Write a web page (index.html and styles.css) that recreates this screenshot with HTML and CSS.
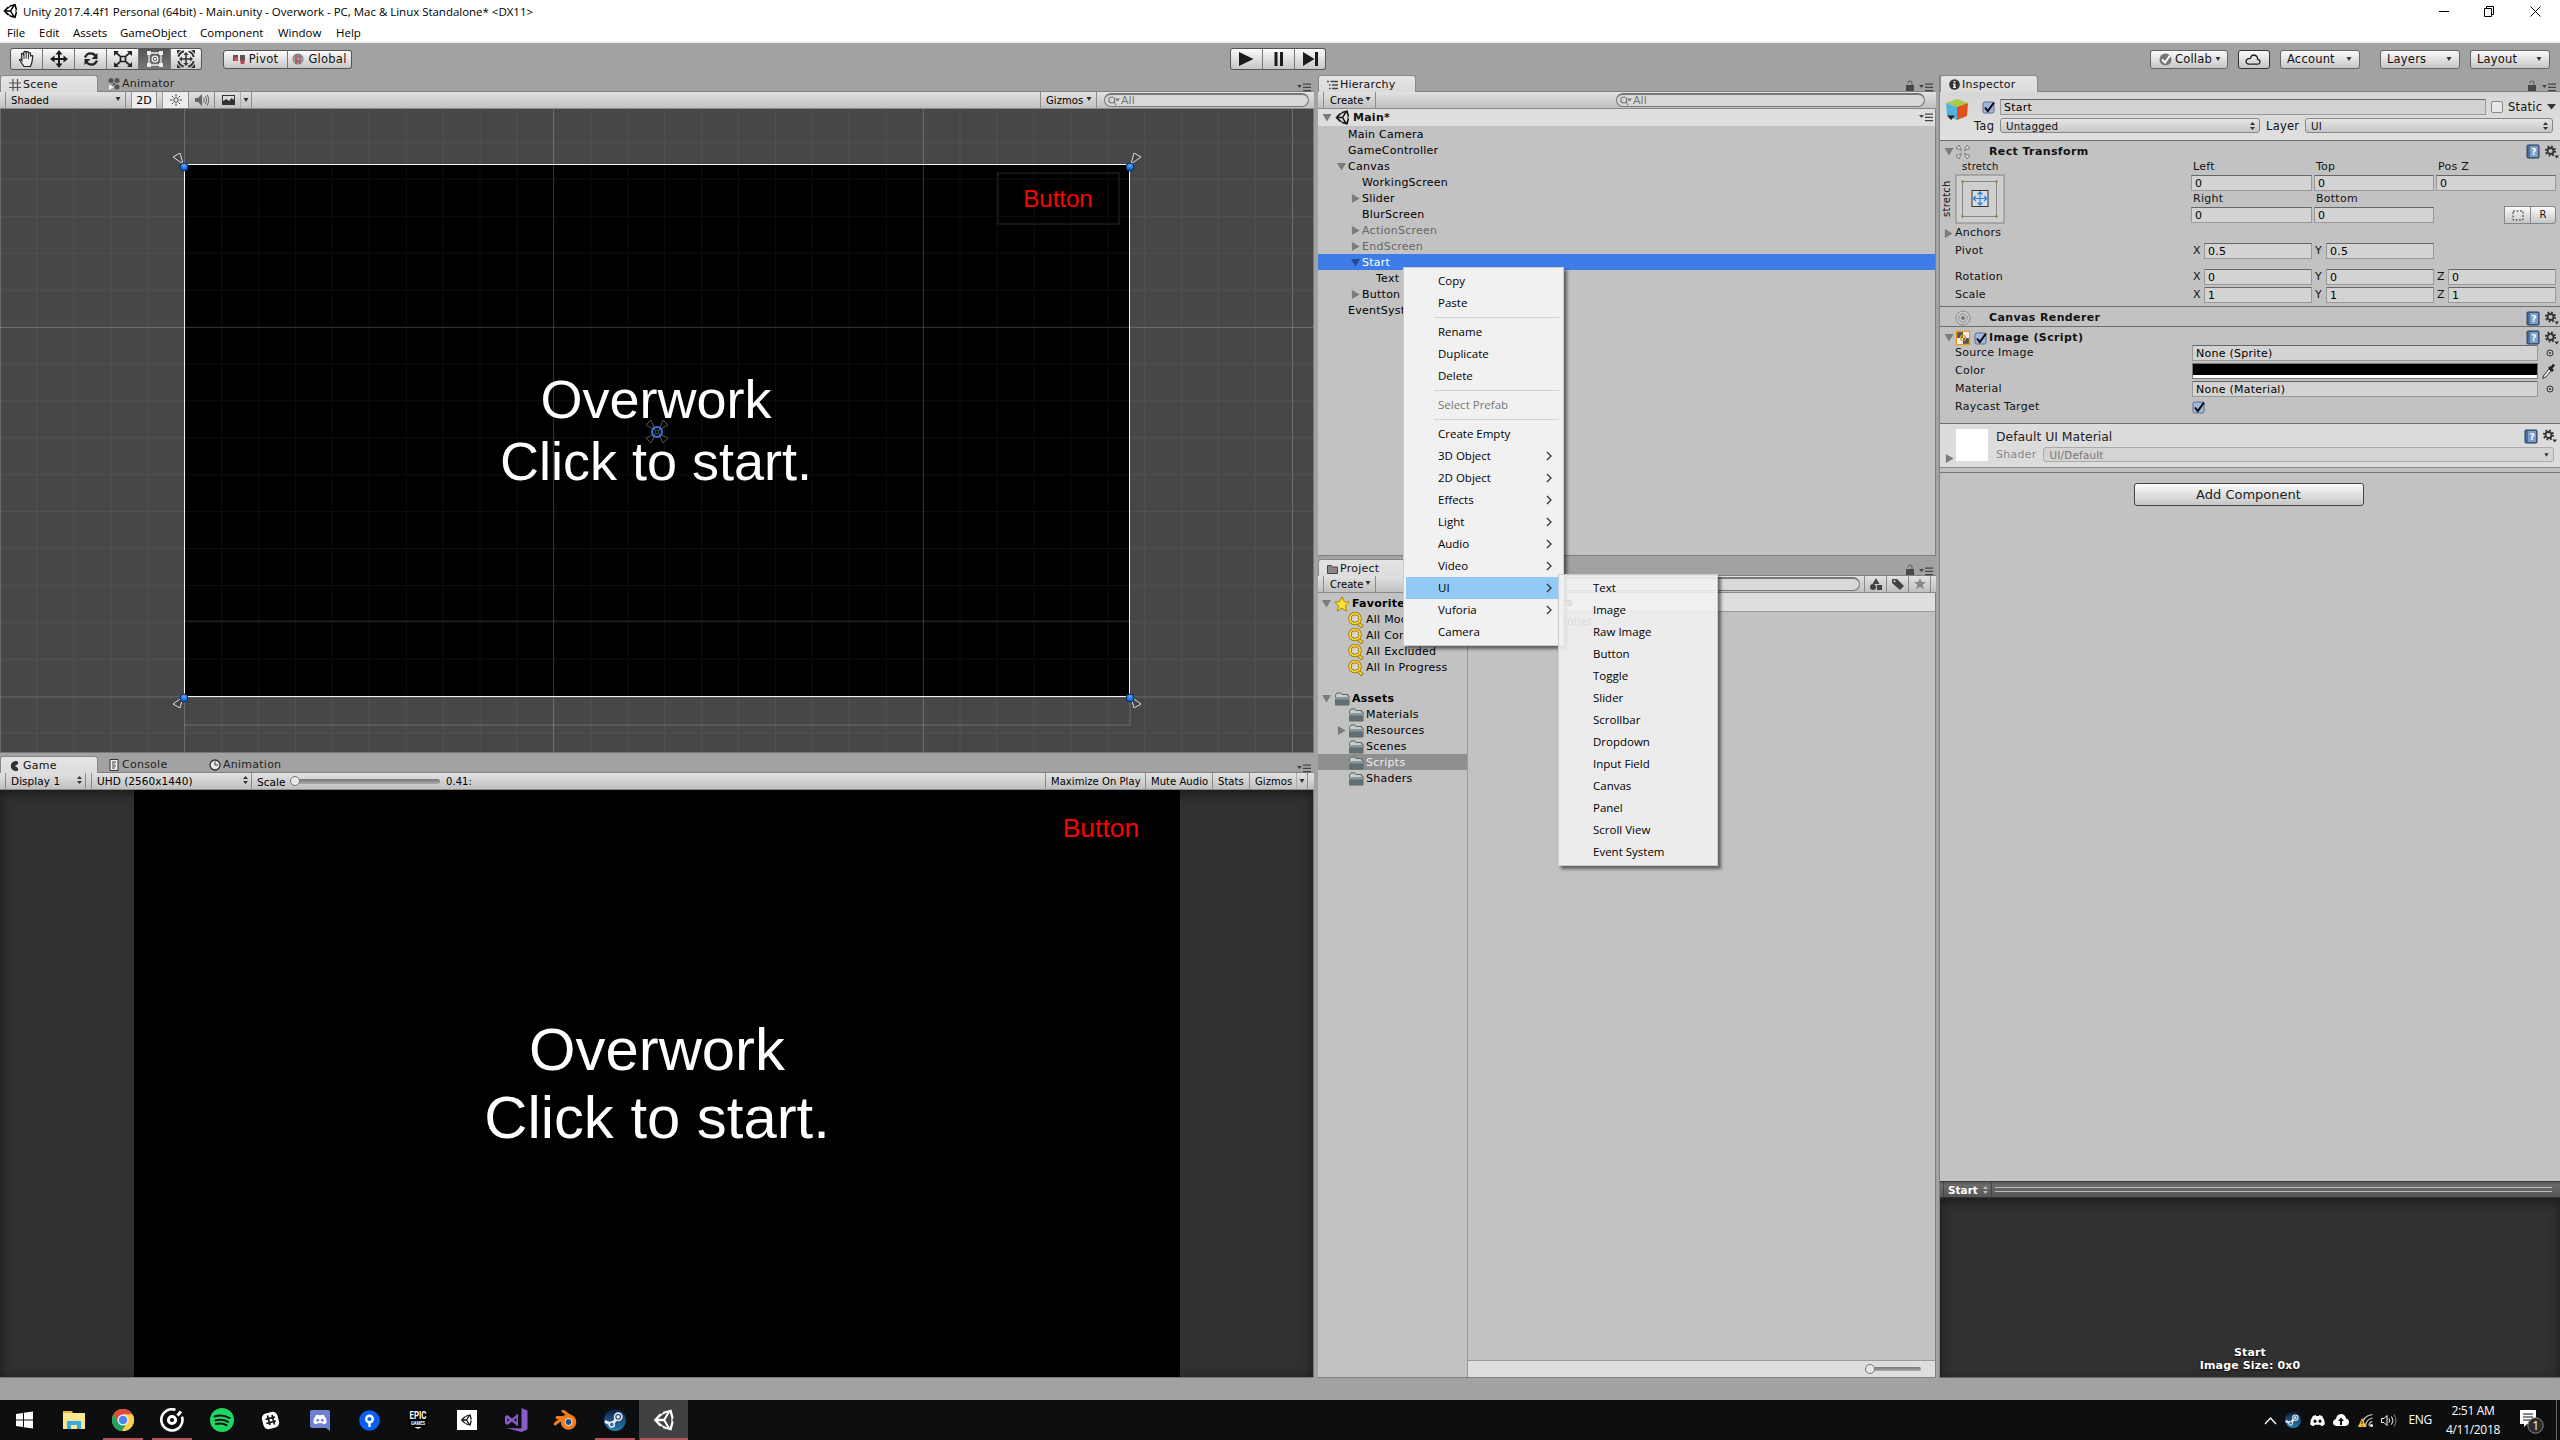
FILE: index.html
```html
<!DOCTYPE html>
<html lang="en">
<head>
<meta charset="utf-8">
<title>Unity 2017.4.4f1 Personal (64bit) - Main.unity - Overwork</title>
<link rel="stylesheet" href="styles.css">
</head>
<body>
<svg class="defs" width="0" height="0">
  <defs>
    <symbol id="unity" viewBox="0 0 24 24"><path fill="currentColor" fill-rule="evenodd" d="M22.5 9.300 20.100.500 11.200 2.900 9.900 5.200 7.200 5.200.700 12l6.500 6.700 2.700.1 1.300 2.300 8.900 2.400 2.400-8.800L21.100 12ZM10.700 6 15.500 3.700 12.800 8.600 11.600 10.700 5.300 10.700ZM5.300 13.300 11.600 13.300 12.800 15.400 15.500 20.300 10.700 18ZM14.700 14.200 13.500 12 14.700 9.800 18.300 3.900 20 9.300 20 14.700 18.300 20.100Z"/></symbol>
    <symbol id="menu" viewBox="0 0 14 9"><path fill="#444" d="M0 2h5L2.500 5ZM6 .5h8v1.300H6ZM6 3.700h8V5H6ZM6 6.900h8v1.300H6Z"/></symbol>
    <symbol id="lock" viewBox="0 0 8 11"><path fill="#484848" d="M0 5h8v6H0Z"/><path d="M2 3.500Q2 1 4 1T6 3.500V5" fill="none" stroke="#666" stroke-width="1.200"/></symbol>
    <symbol id="lens" viewBox="0 0 12 10"><circle cx="3.800" cy="4" r="3" fill="none" stroke="#777" stroke-width="1.200"/><path d="M6 6l2 3" stroke="#777" stroke-width="1.300"/><path fill="#777" d="M7 2.500h5L9.500 5.500Z"/></symbol>
    <symbol id="down" viewBox="0 0 10 10"><path fill="#7b7b7b" d="M0 1h10L5 9.500Z"/></symbol>
    <symbol id="right" viewBox="0 0 10 10"><path fill="#7b7b7b" d="M1 0v10L9.500 5Z"/></symbol>
    <symbol id="folder" viewBox="0 0 16 14"><path fill="#c9cdce" stroke="#59676a" d="M1.500 13V3L3 1h4l1 1.500h5.500V4H15v9Z"/><path fill="#5e6e72" d="M1 5.500h14V13H1Z"/><path fill="#8b989b" d="M1 5h14v2.500H1Z"/></symbol>
    <symbol id="search" viewBox="0 0 16 16"><path d="M10.500 11 14.500 15" stroke="#8a6a12" stroke-width="3.800"/><path d="M10.500 11 14 14.500" stroke="#f6d62c" stroke-width="2.200"/><circle cx="7" cy="6.500" r="5" fill="#d4d4d4" stroke="#8a6a12" stroke-width="3.400"/><circle cx="7" cy="6.500" r="5" fill="none" stroke="#f6d62c" stroke-width="2"/></symbol>
    <symbol id="book" viewBox="0 0 14 15"><rect x="1" y="1" width="12" height="13" rx="1" fill="#4c6f9c" stroke="#23405f"/><path fill="#7d9fc8" d="M4 2h8v11H4Z"/><text x="8" y="11" font-size="9" font-family="DejaVu Sans" font-weight="bold" text-anchor="middle" fill="#fff">?</text></symbol>
    <symbol id="gear" viewBox="0 0 14 14"><circle cx="5.500" cy="6" r="3" fill="none" stroke="#333" stroke-width="1.800"/><circle cx="5.500" cy="6" r="4.600" fill="none" stroke="#333" stroke-width="2" stroke-dasharray="1.800 1.813"/><path fill="#333" d="M9.500 10.500H14L11.700 13.500Z"/></symbol>
    <symbol id="check" viewBox="0 0 14 14"><rect x="1" y="2" width="11" height="11" rx="1.500" fill="#9db8dc" stroke="#5b6d88"/><path d="M3 7.500 5.800 11 12 2.500" fill="none" stroke="#0a0a0a" stroke-width="2"/></symbol>
    <symbol id="updown" viewBox="0 0 5 8"><path fill="#333" d="M0 3h5L2.500 0ZM0 5h5L2.500 8Z"/></symbol>
    <symbol id="caret" viewBox="0 0 6 4"><path fill="#333" d="M.5 0h5L3 4Z"/></symbol>
    <symbol id="chev" viewBox="0 0 6 10"><path d="M1 1l4 4-4 4" fill="none" stroke="#333" stroke-width="1.300"/></symbol>
    <symbol id="target" viewBox="0 0 8 8"><circle cx="4" cy="4" r="3" fill="none" stroke="#333"/><circle cx="4" cy="4" r="1" fill="#333"/></symbol>
    <symbol id="anchor" viewBox="0 0 10 11"><path d="M10 11 0 4 7 0Z" fill="#444" stroke="#ddd" stroke-width="1"/></symbol>
    <symbol id="discord" viewBox="0 0 16 12"><path fill="#fff" fill-rule="evenodd" d="M3 1 6 0l.5 1h3L10 0l3 1q3 4 3 9-2 2-4 2l-1-1.500H5L4 12Q2 12 0 10 0 5 3 1ZM5.300 5a1.700 1.800 0 1 0 .01 0ZM10.700 5a1.700 1.800 0 1 0 .01 0Z"/></symbol>
    <symbol id="steam" viewBox="0 0 24 24"><circle cx="12" cy="12" r="12" fill="url(#steamg)"/><path d="M1 13.500 8.500 17 14.500 9.500" fill="none" stroke="#e4e9ee" stroke-width="3.500"/><circle cx="15.500" cy="8.500" r="4" fill="#16396a" stroke="#e4e9ee" stroke-width="1.800"/><circle cx="15.500" cy="8.500" r="2" fill="#e4e9ee"/><circle cx="8.500" cy="17" r="2.800" fill="#2b6fa8" stroke="#e4e9ee" stroke-width="1.600"/></symbol>
    <linearGradient id="steamg" x1="0" y1="0" x2="0" y2="1"><stop offset="0" stop-color="#0f1d3f"/><stop offset="1" stop-color="#2480b8"/></linearGradient>
    <radialGradient id="blue" cx=".5" cy=".3"><stop offset="0" stop-color="#6aabf5"/><stop offset="1" stop-color="#0d62dd"/></radialGradient>
    <pattern id="minor" x="0" y="0" width="36.920" height="36.920" patternUnits="userSpaceOnUse" patternTransform="translate(-.4 32.900)"><path d="M.5 0V37M0 .5H37" stroke="#fff" stroke-opacity=".05"/></pattern>
  </defs>
</svg>

<header class="titlebar">
  <svg class="app-icon" width="15" height="18"><use href="#unity"/></svg>
  <span>Unity 2017.4.4f1 Personal (64bit) - Main.unity - Overwork - PC, Mac &amp; Linux Standalone* &lt;DX11&gt;</span>
  <svg class="win-buttons" width="112" height="20" viewBox="0 0 112 20" fill="none" stroke="#000"><path d="M0 10.500h10M45.500 7.500h7v8h-7ZM47.500 7V5.500h7v8H53M91.500 5.500l10 10M101.500 5.500l-10 10"/></svg>
</header>
<nav class="menubar"><span class="m1">File</span><span class="m2">Edit</span><span class="m3">Assets</span><span class="m4">GameObject</span><span class="m5">Component</span><span class="m6">Window</span><span>Help</span></nav>

<div class="toolbar">
  <div class="btn-group tools">
    <b><svg width="18" height="18" viewBox="0 0 18 18"><path d="M6 16.500 1.500 10q.5-1.500 2.500.5L3.500 4q1-1.500 2 .5L6 2q1.500-1.500 2 .5Q10 .5 10.500 3q2-1 2 1l.3 2q1.700-1 2 0L14 12l-1.500 4.500Z" fill="#eee" stroke="#222" stroke-width="1.200"/><path d="M6 4v5M8.200 3v5.500M10.500 4v5" stroke="#222" stroke-width=".9"/></svg></b>
    <b><svg width="18" height="18" viewBox="0 0 18 18"><path fill="#1c1c1c" d="M9 0l3.500 4.500H10V8h3.500V5.500L18 9l-4.500 3.500V10H10v3.500h2.500L9 18l-3.500-4.500H8V10H4.500v2.500L0 9l4.500-3.500V8H8V4.500H5.500Z"/></svg></b>
    <b><svg width="18" height="18" viewBox="0 0 18 18" fill="none" stroke="#222" stroke-width="2.300"><path d="M3 7.500Q5 3 9 3.500 12 3.500 13.500 6M15 10.500Q13 15 9 14.500 6 14.500 4.500 12"/><path fill="#222" stroke="none" d="M15.500 3v6h-6ZM2.500 15V9h6Z"/></svg></b>
    <b><svg width="18" height="18" viewBox="0 0 18 18" fill="none" stroke="#222" stroke-width="1.700"><path d="M6.500 6.500h5v5h-5ZM6 6 1 2M12 6l5-4M6 12l-5 4M12 12l5 4"/><path fill="#222" stroke="none" d="M0 1h5L0 6ZM18 1v5l-5-5ZM0 17v-5l5 5ZM18 17h-5l5-5Z"/></svg></b>
    <b class="on"><svg width="18" height="18" viewBox="0 0 18 18" fill="none" stroke="#eee" stroke-width="1.300"><path d="M3 3h12v12H3Z"/><circle cx="9" cy="9" r="2.800"/><path fill="#eee" stroke="none" d="M1 1h4v4H1ZM13 1h4v4h-4ZM1 13h4v4H1ZM13 13h4v4h-4ZM8 8h2v2H8Z"/></svg></b>
    <b><svg width="20" height="20" viewBox="0 0 20 20" fill="none" stroke="#333" stroke-width="2"><circle cx="10" cy="10" r="8" stroke-dasharray="8 4.566" stroke-dashoffset="-2.280"/><path stroke-width="1.500" d="M10 5v10M5 10h10"/><path fill="#333" stroke="none" d="M10 3l2.500 3h-5ZM10 17l2.500-3h-5ZM3 10l3-2.500v5ZM17 10l-3-2.500v5ZM1 1h4L1 5ZM19 1v4l-4-4ZM1 19v-4l4 4ZM19 19h-4l4-4Z"/></svg></b>
  </div>
  <div class="btn-group pivot">
    <b><svg width="12" height="11" viewBox="0 0 12 11"><path fill="#555" d="M0 1h5v6H0ZM7 1h5v6H7Z"/><circle cx="3" cy="5" r="2" fill="#e04e5e"/><circle cx="9.500" cy="8" r="2.200" fill="#d2384c"/></svg>Pivot</b>
    <b><svg width="12" height="12" viewBox="0 0 12 12"><circle cx="6" cy="6" r="5.500" fill="#777"/><path d="M1 6h10M6 1v10M3 2q-2 4 0 8M9 2q2 4 0 8" fill="none" stroke="#bbb" stroke-width=".7"/><path d="M4 2v6h5" fill="none" stroke="#d94a58" stroke-width="1.600"/></svg>Global</b>
  </div>
  <div class="btn-group play">
    <b><svg width="15" height="14"><path fill="#1c1c1c" d="M0 0v14L14.500 7Z"/></svg></b>
    <b><svg width="10" height="14"><path fill="#1c1c1c" d="M.5 0h3v14h-3ZM6 0h3v14H6Z"/></svg></b>
    <b><svg width="15" height="14"><path fill="#1c1c1c" d="M0 0v14L11.500 7ZM12 0h3v14h-3Z"/></svg></b>
  </div>
  <div class="right-tools">
    <b class="btn collab"><svg width="13" height="13" viewBox="0 0 13 13"><circle cx="6.500" cy="6.500" r="6" fill="#777"/><path d="M3 6.500 6 9.500 11 2.500" fill="none" stroke="#fff" stroke-width="2"/></svg>Collab<svg class="push" width="6" height="4"><use href="#caret"/></svg></b>
    <b class="btn cloud"><svg width="16" height="11" viewBox="0 0 16 11"><path d="M4 10.200H12.500Q15.200 10 15 7.500 14.800 5.500 12.700 5.500 12.500 1.500 9 1 6 1 5.500 4.300 1 4.500 1 7.500 1.200 10 4 10.200Z" fill="none" stroke="#222" stroke-width="1.300"/></svg></b>
    <b class="btn account">Account<svg class="push" width="6" height="4"><use href="#caret"/></svg></b>
    <b class="btn layers">Layers<svg class="push" width="6" height="4"><use href="#caret"/></svg></b>
    <b class="btn layout">Layout<svg class="push" width="6" height="4"><use href="#caret"/></svg></b>
  </div>
</div>

<main class="workspace">
  <div class="col left">
    <section class="panel scene">
      <div class="tabs">
        <span class="tab on w98"><svg width="12" height="12" viewBox="0 0 12 12"><path d="M4 0v12M8.500 0v12M0 4h12M0 8.500h12" stroke="#555" stroke-width="1.200"/></svg>Scene</span>
        <span class="tab t2"><svg width="12" height="12" viewBox="0 0 12 12" fill="#555"><circle cx="3" cy="2.500" r="2.500"/><circle cx="9" cy="2.500" r="2.500"/><circle cx="9" cy="9" r="2.500"/><path d="M3 3l6 6M9 3 3 9" stroke="#555"/><path fill="#eee" d="M1 6.500v5.500L6 9Z"/></svg>Animator</span>
        <svg class="pane-menu" width="14" height="9"><use href="#menu"/></svg>
      </div>
      <div class="bar">
        <span class="seg shaded">Shaded<svg class="push" width="6" height="4"><use href="#caret"/></svg></span>
        <span class="seg lit twod">2D</span>
        <span class="seg lit sun"><svg width="12" height="12" viewBox="0 0 12 12" stroke="#444" fill="none"><circle cx="6" cy="6" r="2.200"/><path d="M6 0v2.500M6 9.500V12M0 6h2.500M9.500 6H12M2 2l1.500 1.500M8.500 8.500 10 10M10 2 8.500 3.500M3.500 8.500 2 10"/></svg></span>
        <span class="seg snd"><svg width="14" height="12" viewBox="0 0 14 12"><path fill="#666" d="M0 4h3l4-4v12L3 8H0Z"/><path d="M8.500 3.500q1.500 2.500 0 5M10.500 2q2.500 4 0 8M12 .5q3.500 5.500 0 11" fill="none" stroke="#666"/></svg></span>
        <span class="seg fx"><svg width="13" height="10" viewBox="0 0 13 10"><path fill="#333" d="M0 0h13v10H0Z"/><path fill="#ddd" d="M1 1h11v4L9.500 3 7 6 4.500 4 1 6Z"/></svg></span>
        <span class="seg fxa"><svg width="6" height="4"><use href="#caret"/></svg></span>
        <span class="seg giz">Gizmos<svg class="push" width="6" height="4"><use href="#caret"/></svg></span>
        <span class="find scene-find"><svg width="12" height="10"><use href="#lens"/></svg>All</span>
      </div>
      <div class="scene-view">
        <svg class="layer" width="1314" height="643">
          <rect width="1314" height="643" fill="#474747"/>
          <rect x="184" y="55" width="946" height="533" fill="#000"/>
          <rect width="1314" height="643" fill="url(#minor)"/>
          <path d="M184.500 0V643M553.500 0V643M923.500 0V643M1292.500 0V643M0 218.500H1314M0 588H1314M.5 0V643" stroke="#fff" stroke-opacity=".17"/>
          <path d="M184 512H1130" stroke="#fff" stroke-opacity=".09" stroke-width="2"/>
          <path d="M184 616H1130V588" stroke="#fff" stroke-opacity=".1" stroke-width="2" fill="none"/>
          <rect x="998" y="64" width="121" height="51" fill="none" stroke="#292929"/>
          <path d="M184.500 55.500H1129.500V587.500H184.500Z" fill="none" stroke="#f2f2f2"/>
        </svg>
        <p class="ui-text scene-title">Overwork<br>Click to start.</p>
        <p class="ui-text scene-btn">Button</p>
        <svg class="layer" width="1314" height="643">
          <use href="#anchor" x="173" y="44" width="10" height="11"/>
          <use href="#anchor" width="10" height="11" transform="translate(1141 44) scale(-1 1)"/>
          <use href="#anchor" width="10" height="11" transform="translate(173 599) scale(1 -1)"/>
          <use href="#anchor" width="10" height="11" transform="translate(1141 599) scale(-1 -1)"/>
          <g fill="url(#blue)" stroke="#122c55"><circle cx="184" cy="58" r="4"/><circle cx="1130" cy="58" r="4"/><circle cx="184" cy="589" r="4"/><circle cx="1130" cy="589" r="4"/></g>
          <g fill="none" stroke="#555"><path d="M655 321l-9-5 5-5ZM659 321l9-5-5-5ZM655 325l-9 4 5 5ZM659 325l9 4-5 5Z"/><circle cx="657" cy="323" r="2" /></g>
          <circle cx="657" cy="323" r="5" fill="none" stroke="#2d7be5" stroke-width="2"/>
        </svg>
      </div>
    </section>
    <section class="panel game">
      <div class="tabs">
        <span class="tab on w98"><svg width="12" height="12" viewBox="0 0 12 12"><path fill="#333" d="M9 1.500A5 5 0 1 0 9 10.500L9 8 6 6 9 4Z"/></svg>Game</span>
        <span class="tab t2"><svg width="12" height="12" viewBox="0 0 12 12"><path fill="#eee" stroke="#333" d="M2 .5h8v11H2Z"/><path d="M4 3h4M4 5h3M4 7h4M4 9h3" stroke="#444"/></svg>Console</span>
        <span class="tab t3"><svg width="12" height="12" viewBox="0 0 12 12"><circle cx="6" cy="6" r="5" fill="#e8e8e8" stroke="#333" stroke-width="1.300"/><path d="M6 2.500V6H9" fill="none" stroke="#333"/></svg>Animation</span>
        <svg class="pane-menu" width="14" height="9"><use href="#menu"/></svg>
      </div>
      <div class="bar">
        <span class="seg display">Display 1<svg class="push" width="5" height="8"><use href="#updown"/></svg></span>
        <span class="seg uhd">UHD (2560x1440)<svg class="push" width="5" height="8"><use href="#updown"/></svg></span>
        <span class="scale">Scale</span><span class="slider"><i></i></span><span class="ratio">0.41:</span>
        <span class="seg maxi">Maximize On Play</span><span class="seg mute">Mute Audio</span><span class="seg stats">Stats</span><span class="seg giz2">Gizmos</span><span class="seg giza"><svg width="6" height="4"><use href="#caret"/></svg></span>
      </div>
      <div class="game-view">
        <div class="game-canvas"></div>
        <p class="ui-text game-title">Overwork<br>Click to start.</p>
        <p class="ui-text game-btn">Button</p>
      </div>
    </section>
  </div>

  <div class="col mid">
    <section class="panel hierarchy">
      <div class="tabs">
        <span class="tab on w98"><svg width="11" height="10" viewBox="0 0 11 10"><path d="M0 1.500h2M3.500 1.500H11M2 5h1.500M5 5h6M2 8.500h1.500M5 8.500h6" stroke="#444" stroke-width="1.300"/></svg>Hierarchy</span>
        <svg class="pane-lock" width="8" height="11"><use href="#lock"/></svg><svg class="pane-menu" width="14" height="9"><use href="#menu"/></svg>
      </div>
      <div class="bar">
        <span class="seg create">Create<svg class="push" width="6" height="4"><use href="#caret"/></svg></span>
        <span class="find hier-find"><svg width="12" height="10"><use href="#lens"/></svg>All</span>
      </div>
      <div class="scene-row"><svg width="10" height="9"><use href="#down"/></svg><svg class="logo" width="15" height="15"><use href="#unity"/></svg><strong>Main*</strong><svg class="push" width="14" height="9"><use href="#menu"/></svg></div>
      <ul class="tree">
        <li class="d1">Main Camera</li>
        <li class="d1">GameController</li>
        <li class="d1"><svg><use href="#down"/></svg>Canvas</li>
        <li class="d2">WorkingScreen</li>
        <li class="d2"><svg><use href="#right"/></svg>Slider</li>
        <li class="d2">BlurScreen</li>
        <li class="d2 off"><svg><use href="#right"/></svg>ActionScreen</li>
        <li class="d2 off"><svg><use href="#right"/></svg>EndScreen</li>
        <li class="d2 sel"><svg viewBox="0 0 10 10"><path fill="#264c8c" d="M0 1h10L5 9.500Z"/></svg>Start</li>
        <li class="d3">Text</li>
        <li class="d2"><svg><use href="#right"/></svg>Button</li>
        <li class="d1">EventSystem</li>
      </ul>
    </section>
    <section class="panel project">
      <div class="tabs">
        <span class="tab on w98"><svg width="11" height="10" viewBox="0 0 11 10"><path fill="#888" stroke="#444" d="M.5 9.500v-8h4l1 1.500h5v6.500Z"/></svg>Project</span>
        <svg class="pane-lock" width="8" height="11"><use href="#lock"/></svg><svg class="pane-menu" width="14" height="9"><use href="#menu"/></svg>
      </div>
      <div class="bar">
        <span class="seg create">Create<svg class="push" width="6" height="4"><use href="#caret"/></svg></span>
        <span class="find proj-find"><svg width="12" height="10"><use href="#lens"/></svg></span>
        <span class="seg ic first"><svg width="12" height="12" viewBox="0 0 12 12" fill="#444"><path d="M6 0l3.500 6H2.500Z"/><circle cx="3" cy="9" r="3"/><path d="M7 7h5v5H7Z"/></svg></span>
        <span class="seg ic"><svg width="12" height="12" viewBox="0 0 12 12"><path fill="#444" d="M0 1h5l7 7-4 4-8-7Z"/><circle cx="2.500" cy="3.300" r="1" fill="#ddd"/></svg></span>
        <span class="seg ic last"><svg width="12" height="12" viewBox="0 0 12 12"><path fill="#888" d="M6 0l1.700 4H12L8.600 6.800 10 11.500 6 8.700 2 11.500 3.400 6.800 0 4h4.300Z"/></svg></span>
      </div>
      <div class="project-body">
        <ul class="tree folders">
          <li class="p1"><svg><use href="#down"/></svg><svg class="ico" viewBox="0 0 16 16"><path fill="#ffe02e" stroke="#a98500" d="M8 .8l2.200 4.800 5 .5-3.700 3.500 1 5.400L8 12.300 3.500 15l1-5.400L.8 6.100l5-.5Z"/></svg><strong>Favorites</strong></li>
          <li class="p2"><svg class="ico"><use href="#search"/></svg>All Models</li>
          <li class="p2"><svg class="ico"><use href="#search"/></svg>All Conflicted</li>
          <li class="p2"><svg class="ico"><use href="#search"/></svg>All Excluded</li>
          <li class="p2"><svg class="ico"><use href="#search"/></svg>All In Progress</li>
          <li class="p1 assets"><svg><use href="#down"/></svg><svg class="ico"><use href="#folder"/></svg><strong>Assets</strong></li>
          <li class="p2"><svg class="ico"><use href="#folder"/></svg>Materials</li>
          <li class="p2"><svg><use href="#right"/></svg><svg class="ico"><use href="#folder"/></svg>Resources</li>
          <li class="p2"><svg class="ico"><use href="#folder"/></svg>Scenes</li>
          <li class="p2 sel2"><svg class="ico"><use href="#folder"/></svg>Scripts</li>
          <li class="p2"><svg class="ico"><use href="#folder"/></svg>Shaders</li>
        </ul>
        <div class="files">
          <div class="crumb"><span>Assets ▸ <strong>Scripts</strong></span></div>
          <div class="file-list">GameController</div>
          <div class="file-foot"><span class="slider small"><i></i></span></div>
        </div>
      </div>
    </section>
  </div>

  <div class="col right">
    <section class="panel inspector">
      <div class="tabs">
        <span class="tab on w98"><svg width="11" height="11" viewBox="0 0 11 11"><circle cx="5.500" cy="5.500" r="5.300" fill="#333"/><path d="M4.500 2h2v1.500h-2ZM4 4.500h2.500V8H7v1H4V8h.5V5.500H4Z" fill="#eee"/></svg>Inspector</span>
        <svg class="pane-lock" width="8" height="11"><use href="#lock"/></svg><svg class="pane-menu" width="14" height="9"><use href="#menu"/></svg>
      </div>
      <div class="object-head">
        <svg class="cube" width="24" height="24" viewBox="0 0 24 24"><path fill="#a9c94a" d="M1 5 12 1l11 4-11 4Z"/><path fill="#54b1dd" d="M1 5l11 4v13L2 18Z"/><path fill="#e2501a" d="M23 5 12 9v13l10-4Z"/><path fill="#222" d="M2 17.500h8L6 22Z"/></svg>
        <div class="head-rows">
          <div class="hrow"><svg class="chk" width="14" height="14"><use href="#check"/></svg><span class="field name">Start</span><i class="box"></i><span>Static</span><svg class="st" width="9" height="6" viewBox="0 0 9 6"><path fill="#333" d="M0 0h9L4.500 5.500Z"/></svg></div>
          <div class="hrow r2"><span class="tagl">Tag</span><span class="popup tag">Untagged<svg class="push" width="5" height="8"><use href="#updown"/></svg></span><span class="layl">Layer</span><span class="popup lay">UI<svg class="push" width="5" height="8"><use href="#updown"/></svg></span></div>
        </div>
      </div>
      <div class="comp rect">
        <div class="chead h21"><svg class="tri" width="10" height="9"><use href="#down"/></svg><svg class="cic" width="16" height="16" viewBox="0 0 16 16" fill="#ddd" stroke="#777"><path d="M6.500 6.500 1 4l3-3ZM9.500 6.500 15 4l-3-3ZM6.500 9.500 1 12l3 3ZM9.500 9.500 15 12l-3 3Z"/></svg><strong>Rect Transform</strong><svg class="bk" width="14" height="15"><use href="#book"/></svg><svg class="gr" width="14" height="14"><use href="#gear"/></svg></div>
        <div class="rt">
          <div class="stretch">
            <span class="sh">stretch</span><span class="sv">stretch</span>
            <svg width="50" height="50" viewBox="0 0 50 50"><rect x="1" y="1" width="48" height="48" fill="#cfcfcf" stroke="#828282"/><rect x="7.500" y="7.500" width="34" height="35" fill="none" stroke="#888"/><path fill="#a06a14" d="M6.500 6.500h2v2h-2ZM40.500 6.500h2v2h-2ZM6.500 41.500h2v2h-2ZM40.500 41.500h2v2h-2Z"/><rect x="17" y="16.500" width="16" height="16" fill="#dcdcdc" stroke="#333"/><path d="M25 17.500v14M18 24.500h14M22.500 20.500 25 17.800l2.500 2.700M22.500 28.500l2.500 2.700 2.500-2.700M21 22l-2.700 2.500L21 27M29 22l2.700 2.500L29 27" stroke="#2c83e8" stroke-width="1.200" fill="none"/></svg>
          </div>
          <div class="rfields">
            <span>Left</span><span>Top</span><span>Pos Z</span>
            <span class="field">0</span><span class="field">0</span><span class="field">0</span>
            <span>Right</span><span>Bottom</span><span></span>
            <span class="field">0</span><span class="field">0</span><span class="rbtns"><b><svg width="12" height="11"><rect x="1" y="1" width="10" height="9" fill="none" stroke="#333" stroke-dasharray="2 1.500"/></svg></b><b>R</b></span>
          </div>
        </div>
        <div class="prow"><svg class="tri" width="9" height="9"><use href="#right"/></svg><span class="lbl">Anchors</span></div>
        <div class="prow pv"><span class="lbl">Pivot</span><span class="vec"><em>X</em><span class="field">0.5</span></span><span class="vec"><em>Y</em><span class="field">0.5</span></span></div>
        <div class="prow rot"><span class="lbl">Rotation</span><span class="vec"><em>X</em><span class="field">0</span></span><span class="vec"><em>Y</em><span class="field">0</span></span><span class="vec"><em>Z</em><span class="field">0</span></span></div>
        <div class="prow"><span class="lbl">Scale</span><span class="vec"><em>X</em><span class="field">1</span></span><span class="vec"><em>Y</em><span class="field">1</span></span><span class="vec"><em>Z</em><span class="field">1</span></span></div>
      </div>
      <div class="comp canvasr">
        <div class="chead h18"><svg class="cic notri" width="16" height="16" viewBox="0 0 16 16" fill="none" stroke="#888"><circle cx="8" cy="8" r="7" fill="#ccc"/><circle cx="8" cy="8" r="4.200"/><circle cx="8" cy="8" r="1.800" fill="#777"/></svg><strong>Canvas Renderer</strong><svg class="bk" width="14" height="15"><use href="#book"/></svg><svg class="gr" width="14" height="14"><use href="#gear"/></svg></div>
      </div>
      <div class="comp image">
        <div class="chead h18"><svg class="tri" width="10" height="9"><use href="#down"/></svg><svg class="cic" width="16" height="16" viewBox="0 0 16 16"><rect x="1.500" y="1.500" width="13" height="13" fill="#555" stroke="#eb9a1c" stroke-width="1.500"/><path fill="#eee" d="M2 8h6v6H2ZM8 2h6v6H8Z"/><circle cx="8" cy="8" r="2.500" fill="none" stroke="#eb9a1c" stroke-width="1.300"/></svg><svg class="chk2" width="14" height="14"><use href="#check"/></svg><strong class="near">Image (Script)</strong><svg class="bk" width="14" height="15"><use href="#book"/></svg><svg class="gr" width="14" height="14"><use href="#gear"/></svg></div>
        <div class="prow"><span class="lbl">Source Image</span><span class="field wide">None (Sprite)</span><svg class="tg" width="8" height="8"><use href="#target"/></svg></div>
        <div class="prow"><span class="lbl">Color</span><span class="color"></span><svg class="pick" width="15" height="17" viewBox="0 0 15 17"><path d="M1.500 15.500 3 12 8 6l2 2-5 6Z" fill="#eee" stroke="#333"/><path d="M8 4l4 4M9.500 6l3.500-4.500" stroke="#222" stroke-width="2.600"/></svg></div>
        <div class="prow"><span class="lbl">Material</span><span class="field wide">None (Material)</span><svg class="tg" width="8" height="8"><use href="#target"/></svg></div>
        <div class="prow"><span class="lbl">Raycast Target</span><svg class="rc" width="14" height="14"><use href="#check"/></svg></div>
      </div>
      <div class="material">
        <svg class="mtri" width="9" height="9"><use href="#right"/></svg><i class="swatch"></i>
        <div class="mtext"><div class="mtitle">Default UI Material<svg class="bk" width="14" height="15"><use href="#book"/></svg><svg class="gr" width="14" height="14"><use href="#gear"/></svg></div><div class="mshader">Shader<span class="popup">UI/Default<svg class="push" width="5" height="4"><use href="#caret"/></svg></span></div></div>
      </div>
      <div class="add-area"><b class="btn add">Add Component</b></div>
      <div class="preview-bar"><span class="ptitle">Start<svg width="5" height="8" viewBox="0 0 5 8"><path fill="#bbb" d="M0 3h5L2.500 0ZM0 5h5L2.500 8Z"/></svg></span><i class="grip"></i></div>
      <div class="preview">Start<br>Image Size: 0x0</div>
    </section>
  </div>
</main>

<footer class="taskbar">
  <div class="apps">
    <span><svg width="18" height="18" viewBox="0 0 18 18"><path fill="#fff" d="M0 3l7-1v6.500H0ZM8 1.800 17 .5v8H8ZM0 9.500h7V16l-7-1ZM8 9.500h9v8L8 16.200Z"/></svg></span>
    <span><svg width="22" height="20" viewBox="0 0 22 20"><path fill="#e7b93c" d="M0 1h9l1 2H0Z"/><path fill="#fce694" d="M0 3h22v16H0Z"/><path fill="#38ace0" d="M4 11h14v8h-4v-4H8v4H4Z"/></svg></span>
    <span class="run"><svg width="24" height="24" viewBox="0 0 24 24"><circle cx="12" cy="12" r="11" fill="#fccd49"/><path fill="#dc4c40" d="M2.500 6.500A11 11 0 0 1 21.500 6.500H12L7 14Z"/><path fill="#1ca260" d="M2.500 6.500A11 11 0 0 0 11 23L16 15 7 14Z"/><path fill="#fccd49" d="M11 23A11 11 0 0 0 21.500 6.500H12L17 13.500Z"/><circle cx="12" cy="12" r="5.500" fill="#f4f4f4"/><circle cx="12" cy="12" r="4.300" fill="#4a87ee"/></svg></span>
    <span class="run"><svg width="24" height="24" viewBox="0 0 24 24" fill="none" stroke="#fff"><path stroke-width="2.600" d="M15.500 1.900A10.600 10.600 0 1 0 22 8.700"/><circle cx="12" cy="12" r="3.600" stroke-width="3"/><path stroke-width="3" d="M17.500 7.500 21 3.500"/></svg></span>
    <span><svg width="24" height="24" viewBox="0 0 24 24"><circle cx="12" cy="12" r="12" fill="#1ed760"/><path d="M4.500 8.500q8-2.500 15 1.500M5.500 12.500q7-2 12.500 1.300M6 16q6-1.500 10.500 1.200" fill="none" stroke="#111" stroke-width="2" stroke-linecap="round"/></svg></span>
    <span><svg width="19" height="19" viewBox="0 0 19 19"><rect x="1.500" y="1.500" width="16" height="16" rx="5" fill="#fff" transform="rotate(-14 9.500 9.500)"/><path d="M6.500 4.500 9 14M11 4l2.500 9.500M4.500 8.300 14 6M5.300 12.500l9.500-2.500" stroke="#111" stroke-width="1.700"/></svg></span>
    <span><svg width="20" height="22" viewBox="0 0 20 22"><path fill="#6f82cf" d="M2 1h16q2 0 2 2v19l-4-3H2q-2 0-2-2V3q0-2 2-2Z"/><use href="#discord" x="3" y="5.500" width="14" height="10"/></svg></span>
    <span><svg width="21" height="21" viewBox="0 0 21 21"><circle cx="10.500" cy="10.500" r="10.300" fill="#0a5ff5"/><circle cx="10.500" cy="9" r="3.300" fill="none" stroke="#fff" stroke-width="2.400"/><path d="M10.500 11v6" stroke="#fff" stroke-width="2.400"/></svg></span>
    <span><svg width="21" height="24" viewBox="0 0 21 24"><path fill="#000" d="M0 1h20v18l-10 4L0 19Z"/><text x="10" y="11" font-family="Roboto" font-size="10.500" font-weight="bold" fill="#fff" letter-spacing="0" text-anchor="middle" textLength="17" lengthAdjust="spacingAndGlyphs">EPIC</text><text x="10" y="16.500" font-family="Roboto" font-size="4.500" font-weight="bold" fill="#fff" letter-spacing="0" text-anchor="middle" textLength="14" lengthAdjust="spacingAndGlyphs">GAMES</text><path fill="#ddd" d="M6 19h8l-4 2Z"/></svg></span>
    <span><svg width="20" height="20"><rect width="20" height="20" fill="#fff"/><use href="#unity" x="3.500" y="4" width="12" height="12" color="#111"/></svg></span>
    <span><svg width="24" height="24" viewBox="0 0 24 24"><path fill="#8a5cc7" fill-rule="evenodd" d="M17.500 0 23.500 2.500V21.500L17.500 24 2 20l15.500 .5ZM1 8.500 3.500 7 8 10.700 14 5.500V18.500L8 13.500 3.500 17 1 15.500ZM3.300 10.300v3.500L5.500 12ZM10 12l2.500 2.200V9.800Z"/></svg></span>
    <span><svg width="23" height="21" viewBox="0 0 23 21"><path d="M9 1l8 6M1 14l9-7M3 7.500h8" stroke="#f57c18" stroke-width="3" stroke-linecap="round"/><circle cx="14.500" cy="12" r="5.800" fill="#fff" stroke="#f57c18" stroke-width="4"/><circle cx="14.500" cy="12" r="3" fill="#17508b"/></svg></span>
    <span class="run"><svg width="22" height="22"><use href="#steam"/></svg></span>
    <span class="run active"><svg width="22" height="22" color="#fff"><use href="#unity"/></svg></span>
  </div>
  <div class="tray">
    <svg width="13" height="9" viewBox="0 0 13 9"><path d="M1 8l5.500-6L12 8" fill="none" stroke="#fff" stroke-width="1.300"/></svg>
    <svg width="16" height="16"><use href="#steam"/></svg>
    <svg width="15" height="11"><use href="#discord"/></svg>
    <svg width="16" height="12" viewBox="0 0 16 12"><path fill="#fff" d="M3.500 12Q0 11.500 0 8.500 0 6 3 5 3.500.5 8 0q4 0 5 4.500 3 .5 3 4-.5 3-3.500 3.500Z"/><path fill="#111" d="M8 3.500 11 7H9v4H7V7H5Z"/></svg>
    <svg width="15" height="14" viewBox="0 0 15 14"><path d="M4 13Q4 3 14.500 1.500M7.500 13Q8 6.500 14.500 5M11 13q0-4 3.500-4.500" fill="none" stroke="#ccc" stroke-width="1.200"/><circle cx="13.500" cy="12.500" r="1.500" fill="#fff"/><path fill="#f7c331" d="M4 5l4.500 9H0Z"/><path d="M4 8v3M4 12v1" stroke="#222"/></svg>
    <svg width="16" height="13" viewBox="0 0 16 13" fill="none" stroke="#fff"><path d="M.5 4.500h2.500L6 1.500v10L3 8.500H.5ZM8 4.500q1.500 2 0 4M10.500 2.500q3 4 0 8"/><path stroke="#888" d="M13 .5q4 6 0 12"/></svg>
    <span class="eng">ENG</span>
    <span class="clock">2:51 AM<br>4/11/2018</span>
    <svg class="note" width="26" height="26" viewBox="0 0 26 26"><path fill="#fff" d="M1 1h16v14H8l-3 3v-3H1Z"/><path d="M4 5h10M4 8h10M4 11h7" stroke="#111"/><circle cx="16.500" cy="16.500" r="7.700" fill="#2b2b2b" stroke="#8b8b8b"/><text x="16.500" y="21" font-family="Open Sans" font-size="12" fill="#fff" text-anchor="middle">1</text></svg>
    <i class="edge"></i>
  </div>
</footer>

<div class="ctx main-menu">
  <div>Copy</div><div>Paste</div><hr>
  <div>Rename</div><div>Duplicate</div><div>Delete</div><hr>
  <div class="dis">Select Prefab</div><hr>
  <div>Create Empty</div>
  <div>3D Object<svg><use href="#chev"/></svg></div><div>2D Object<svg><use href="#chev"/></svg></div><div>Effects<svg><use href="#chev"/></svg></div><div>Light<svg><use href="#chev"/></svg></div><div>Audio<svg><use href="#chev"/></svg></div><div>Video<svg><use href="#chev"/></svg></div>
  <div class="hot">UI<svg><use href="#chev"/></svg></div><div>Vuforia<svg><use href="#chev"/></svg></div><div>Camera</div>
</div>
<div class="ctx sub-menu">
  <div>Text</div><div>Image</div><div>Raw Image</div><div>Button</div><div>Toggle</div><div>Slider</div><div>Scrollbar</div><div>Dropdown</div><div>Input Field</div><div>Canvas</div><div>Panel</div><div>Scroll View</div><div>Event System</div>
</div>
</body>
</html>
```
FILE: styles.css
```css
* { box-sizing: border-box; }
body { margin: 0; width: 2560px; height: 1440px; overflow: hidden; position: relative; display: flex; flex-direction: column; background: #a2a2a2; color: #111; font: 11px/16px "DejaVu Sans", sans-serif; letter-spacing: .25px; }
svg { display: block; flex: none; }
.defs { position: absolute; }
b { font-weight: normal; }
strong { font-weight: bold; }
p, ul { margin: 0; padding: 0; list-style: none; }
.push { margin-left: auto; }

/* window chrome */
.titlebar, .menubar { font: 11.5px/20px "Open Sans", sans-serif; letter-spacing: 0; background: #fff; color: #000; display: flex; flex: none; white-space: pre; }
.titlebar { height: 22px; align-items: center; padding: 2px 9px 0 3px; letter-spacing: -.02px; }
.app-icon { margin-right: 5px; margin-top: -2px; }
.win-buttons { margin: -2px 0 0 auto; }
.menubar { height: 21px; border-bottom: 2px solid #f0f0f0; padding-left: 7px; line-height: 22px; }
.m1 { width: 32px; } .m2 { width: 34px; } .m3 { width: 47px; } .m4 { width: 80px; } .m5 { width: 78px; } .m6 { width: 58px; }

.toolbar { height: 32px; flex: none; display: flex; align-items: center; padding: 0 10px 0 10px; }
.btn-group { display: flex; }
.btn-group b, .btn, .rbtns b { display: flex; align-items: center; justify-content: center; background: linear-gradient(#fbfbfb, #c6c6c6); border: 1px solid #555; }
.btn-group b + b { border-left-color: #777; margin-left: -1px; }
.btn-group b:first-child { border-radius: 3px 0 0 3px; }
.btn-group b:last-child { border-radius: 0 3px 3px 0; }
.tools b, .play b { width: 33px; height: 22px; }
.tools b:last-child, .play b:last-child { width: 32px; }
.tools b.on { background: linear-gradient(#555, #777); }
.pivot { margin-left: 21px; font-size: 11.5px; }
.pivot b { width: 65px; height: 19px; gap: 4px; }
.play { margin-left: 878px; }
.right-tools { display: flex; margin-left: auto; }
.btn { height: 19px; border-radius: 3px; }
.right-tools .btn { padding: 0 7px 0 6px; justify-content: flex-start; font-size: 11.5px; letter-spacing: .2px; border-color: #666; }
.collab { width: 78px; gap: 3px; } .collab svg:first-child { margin-left: 2px; }
.right-tools .cloud { width: 32px; margin: 0 10px; border-color: #333; }
.account, .layers, .layout { width: 80px; } .layers { margin: 0 10px 0 20px; }

.workspace { display: flex; gap: 4px; height: 1325px; flex: none; padding-bottom: 22px; }
.col { display: flex; flex-direction: column; min-width: 0; }
.left { width: 1314px; } .mid { width: 618px; } .right { flex: 1; }
.panel { display: flex; flex-direction: column; flex: none; }
.scene { height: 678px; margin-bottom: 3px; } .game { height: 622px; }
.hierarchy { height: 481px; margin-bottom: 3px; } .project { height: 819px; } .inspector { height: 1303px; }

.tabs { height: 17px; display: flex; position: relative; border-bottom: 1px solid #808080; flex: none; }
.tab { display: flex; align-items: center; gap: 2px; padding-left: 8px; font-size: 11px; letter-spacing: .25px; color: #222; padding-top: 1px; }
.tab.on { width: 98px; background: linear-gradient(#e4e4e4, #dcdcdc); border: 1px solid #888; border-bottom: 0; border-radius: 3px 3px 0 0; margin-bottom: -1px; color: #111; }
.t2 { width: 103px; padding-left: 10px; }
.pane-menu { margin: 8px 3px 0 auto; }
.pane-lock { margin: 5px 5px 0 auto; } .pane-lock + .pane-menu { margin-left: 0; }
.inspector .pane-menu { margin-right: 4px; margin-left: 1px; } .mid .pane-menu { margin-right: 3px; }
.bar { height: 17px; flex: none; display: flex; background: linear-gradient(#e2e2e2, #c0c0c0); border-bottom: 1px solid #8a8a8a; font-size: 10px; letter-spacing: .05px; line-height: 17px; color: #000; }
.seg { display: flex; align-items: center; border-right: 1px solid #8a8a8a; padding: 1px 4px 0 5px; }
.seg:first-child { border-left: 1px solid #8a8a8a; margin-left: 5px; }
.seg .push { margin-top: -3px; }
.shaded { width: 121px; }
.lit { background: #ededed; justify-content: center; padding: 0; }
.twod { width: 26px; margin-left: 5px; border-left: 1px solid #999; font-size: 11px; }
.sun { width: 27px; margin-left: 5px; border-left: 1px solid #999; }
.snd { width: 26px; padding: 0; justify-content: center; }
.fx { width: 26px; border-right-color: #aaa; padding: 0 0 0 7px; } .fxa { width: 11px; padding: 0 2px; }
.giz { width: 57px; margin-left: 788px; border-left: 1px solid #8a8a8a; }
.find { display: flex; align-items: center; gap: 1px; padding-left: 3px; height: 14px; margin-top: 1px; border: 1px solid #777; border-top-width: 2px; border-radius: 8px; background: #d9d9d9; color: #777; font-size: 11px; line-height: 11px; }
.scene-find { width: 205px; margin-left: 7px; }
.create { width: 53px; padding-left: 6px; }
.hier-find { width: 309px; margin-left: 240px; }
.proj-find { width: 320px; margin-left: 164px; }
.ic { width: 22px; padding: 0; justify-content: center; } .ic.first { margin-left: 4px; width: 23px; border-left: 1px solid #8a8a8a; }

/* scene + game views */
.scene-view { position: relative; height: 643px; border-right: 1px solid #777; overflow: hidden; }
.scene { border-bottom: 1px solid #777; }
.layer { position: absolute; left: 0; top: 0; }
.ui-text { position: absolute; font-family: "Liberation Sans", Arial, sans-serif; letter-spacing: 0; text-align: center; white-space: nowrap; color: #fff; }
.scene-title { left: 456px; width: 400px; top: 259px; font-size: 54px; line-height: 62px; }
.scene-btn { left: 998px; width: 120px; top: 76px; font-size: 24px; line-height: 28px; color: #f00; }
.display { width: 81px; padding-right: 3px; font-size: 10.500px; } .uhd { width: 161px; margin-left: 5px; border-left: 1px solid #8a8a8a; padding-right: 3px; font-size: 10.500px; }
.scale { padding-left: 5px; width: 42px; line-height: 18px; font-size: 10.500px; }
.slider { width: 146px; height: 5px; align-self: center; background: linear-gradient(#777, #aaa); border-radius: 3px; position: relative; }
.slider i { position: absolute; left: -4px; top: -3px; width: 10px; height: 10px; border-radius: 50%; background: #e8e8e8; border: 1px solid #777; }
.ratio { margin-left: 6px; width: 599px; line-height: 18px; }
.maxi { width: 101px; border-left: 1px solid #8a8a8a; } .mute { width: 67px; padding: 1px 0 0 5px; } .stats { width: 37px; } .giz2 { width: 47px; padding-right: 0; border-right-color: #aaa; } .giza { width: 11px; padding: 0 2px; }
.game-view { position: relative; height: 588px; background: #313131; box-shadow: inset 0 3px 12px #181818; border-bottom: 1px solid #777; border-right: 1px solid #777; display: flex; }
.game-canvas { width: 1046px; margin-left: 134px; background: #000; }
.game-title { left: 457px; width: 400px; top: 225.500px; font-size: 59.800px; line-height: 68.600px; }
.game-btn { left: 1041px; width: 120px; top: 22px; font-size: 26.500px; line-height: 32px; color: #f00; }

/* trees */
.panel.hierarchy, .project { border-bottom: 1px solid #808080; }
.scene-row { height: 18px; background: #dedede; border-bottom: 1px solid #9b9b9b; display: flex; align-items: center; padding: 0 2px 0 4px; flex: none; border-right: 1px solid #808080; }
.scene-row .logo { margin: 0 3px 0 3px; }
.tree { background: #c2c2c2; flex: 1; color: #000; border-right: 1px solid #808080; margin-top: -1px; }
.tree li { height: 16px; display: flex; align-items: center; line-height: 16px; padding-top: 1px; white-space: nowrap; }
.tree svg { width: 9px; height: 9px; }
.d1 { padding-left: 30px; } .d2 { padding-left: 44px; } .d3 { padding-left: 58px; }
.tree .d1 svg, .tree .d2 svg { margin: -1px 2px 0 -11px; }
.off { color: #666; }
.sel { background: #3e7de7; color: #fff; }
.project-body { display: flex; flex: 1; background: #c2c2c2; }
.folders { width: 150px; flex: none; margin: 0; padding-top: 2px; border-right: 1px solid #999; }
.tree svg.ico { width: 16px; height: 16px; margin-right: 2px; }
.p1 { padding-left: 4px; gap: 2px; } .p2 { padding-left: 30px; }
.tree .p1 svg.ico { margin-left: 1px; margin-right: 0; }
.p2 svg:not(.ico) { margin: 0 2px 0 -11px; }
.tree li.assets { margin-top: 15px; }
.sel2 { background: #8f8f8f; color: #eee; }
.files { flex: 1; display: flex; flex-direction: column; border-right: 1px solid #808080; }
.crumb { height: 19px; background: #dedede; border-bottom: 1px solid #999; line-height: 20px; } .crumb span { display: block; width: 105px; text-align: right; white-space: nowrap; }
.file-list { flex: 1; padding: 2px 0 0 34px; }
.file-foot { height: 17px; background: #dedede; border-top: 1px solid #999; display: flex; padding-right: 14px; }
.small { width: 52px; height: 4px; margin-left: auto; }

/* inspector */
.inspector { border-left: 1px solid #808080; margin-left: -1px; padding-right: 0; }
.inspector > * { flex: none; }
.object-head { height: 49px; background: linear-gradient(#d6d6d6, #e0e0e0); border-bottom: 1px solid #6e6e6e; display: flex; padding: 6px 0 0 5px; font-size: 11.5px; }
.head-rows { flex: 1; padding-left: 13px; }
.hrow { display: flex; align-items: center; height: 17px; }
.r2 { margin-top: 2px; }
.field { display: block; background: #d3d3d3; border: 1px solid #999; border-top-color: #666; height: 16px; line-height: 15px; padding-left: 3px; color: #000; font-size: 11px; }
.chk { margin-right: 4px; } .name { width: 486px; } .box { width: 12px; height: 12px; margin: 0 5px 0 5px; border: 1px solid #888; border-radius: 2px; background: #e8e8e8; }
.st { margin-left: 5px; } .tagl { width: 26px; margin-left: -8px; }
.popup { display: flex; align-items: center; height: 15px; background: linear-gradient(#e6e6e6, #c6c6c6); border: 1px solid #888; border-radius: 3px; padding: 1px 4px 0 5px; font-size: 10.300px; }
.tag { width: 260px; } .layl { padding-left: 6px; width: 45px; } .lay { width: 248px; }
.comp { background: #c2c2c2; border-bottom: 1px solid #6e6e6e; }
.rect { height: 166px; }
.chead { display: flex; align-items: center; padding-left: 4px; font-size: 11px; letter-spacing: .38px; }
.h21 { height: 21px; } .h18 { height: 18px; }
.tri { margin-right: 1px; } .cic { margin-right: 18px; } .cic.notri { margin-left: 11px; }
.h18 .cic:not(.notri) { margin-right: 3px; }
.chk2 { margin-right: 1px; }
.bk { margin-left: auto; } .gr { margin: 0 1px 0 5px; }
.rt { display: flex; margin-top: -3px; padding-left: 1px; }
.stretch { width: 250px; position: relative; height: 65px; padding: 15px 0 0 14px; font-size: 10px; }
.sh { position: absolute; left: 21px; top: 0; }
.sv { position: absolute; left: 0; top: 15px; height: 50px; width: 12px; writing-mode: vertical-rl; transform: rotate(180deg); line-height: 12px; text-align: center; }
.rfields { display: grid; grid-template-columns: 121px 120px 120px; column-gap: 2px; grid-auto-rows: 16px; }
.rfields span:not(.field):not(.rbtns) { padding-left: 2px; }
.rbtns { display: flex; justify-content: flex-end; } .rbtns b { width: 27px; height: 18px; margin: -1px 0 0; border-color: #888; font-size: 10px; } .rbtns b:last-child { border-left: 0; border-radius: 0 3px 3px 0; width: 25px; }
.prow { display: flex; align-items: center; height: 18px; padding-left: 4px; }
.prow .lbl { width: 236px; margin-left: 11px; }
.prow .tri { margin-right: -9px; }
.prow .vec { display: flex; width: 122px; padding-left: 2px; } .vec em { font-style: normal; width: 11px; } .vec .field { flex: 1; margin-right: 1px; }
.rot { margin-top: 8px; }
.prow .field.wide, .color { width: 346px; margin-left: 1px; } .tg { margin-left: 8px; } .rc { margin-left: 1px; }
.canvasr { height: 20px; padding-top: 2px; }
.image { height: 97px; padding-top: 2px; }
.image .h18 { height: 17px; margin-bottom: -2px; }
.color { height: 16px; background: linear-gradient(#000 11px, #fff 11px); border: 1px solid #777; } .pick { margin-left: 3px; }
.material { height: 44px; background: #dcdcdc; border-bottom: 1px solid #8a8a8a; display: flex; align-items: flex-start; padding: 5px 6px 0 5px; color: #222; }
.mtri { margin-top: 25px; } .swatch { width: 32px; height: 32px; background: #fff; margin: 0 8px 0 2px; }
.mtext { flex: 1; } .mtitle { font-size: 12.400px; letter-spacing: 0; display: flex; height: 18px; } .mtitle .gr { margin-right: -3px; }
.mshader { display: flex; color: #888; font-size: 11px; } .mshader .popup { flex: 1; margin-left: 7px; color: #777; border-color: #aaa; background: #d4d4d4; }
.add-area { background: #c2c2c2; border-top: 4px solid #c2c2c2; box-shadow: inset 0 1px #777; height: 713px; display: flex; justify-content: center; padding: 11px 3px 0 0; }
.add { width: 230px; height: 23px; font-size: 13px; letter-spacing: 0; color: #222; border-color: #444; }
.preview-bar { height: 17px; display: flex; background: linear-gradient(#555, #6b6b6b 20%, #555); border-top: 1px solid #3c3c3c; border-bottom: 1px solid #333; align-items: center; color: #fff; font-weight: bold; font-size: 10.500px; letter-spacing: 0; }
.ptitle { display: flex; align-items: center; width: 49px; height: 15px; margin-left: 3px; padding-left: 4px; gap: 5px; border-left: 1px solid #444; border-right: 1px solid #444; }
.grip { flex: 1; height: 5px; margin: 0 8px 0 3px; border-top: 1px solid #bbb; border-bottom: 1px solid #bbb; }
.preview { height: 180px; background: #313131; box-shadow: inset 0 4px 12px #1c1c1c; border-bottom: 1px solid #666; text-align: center; color: #fff; font: bold 11px/13px "DejaVu Sans", sans-serif; letter-spacing: .15px; padding-top: 148px; text-shadow: 0 1px 2px #000; }

/* taskbar */
.taskbar { height: 40px; flex: none; background: #0d0e10; display: flex; color: #fff; font-family: "Open Sans", sans-serif; }
.apps { display: flex; padding-left: .5px; }
.apps span { width: 49.150px; display: flex; align-items: center; justify-content: center; }
.run { background: linear-gradient(#b4545c, #b4545c) center bottom / 40px 2px no-repeat; }
.apps .active { background: linear-gradient(#b4545c, #b4545c) center bottom / 48px 2px no-repeat #404143; }
.tray { margin-left: auto; display: flex; align-items: center; gap: 8.500px; font-size: 12px; letter-spacing: -.3px; }
.eng { margin-left: 3px; width: 24px; } .clock { width: 64px; text-align: center; line-height: 19px; }
.note { margin: 4px 3px 0 5px; } .edge { width: 1px; height: 40px; background: #666; margin-right: 3px; }

/* context menus */
.ctx { position: absolute; background: #f1f1f1; border: 1px solid #ccc; color: #000; font: 11.5px/22px "Open Sans", sans-serif; letter-spacing: 0; box-shadow: 3px 3px 3px rgba(0,0,0,.5); padding: 2px; }
.ctx div { height: 22px; padding-left: 32px; display: flex; align-items: center; justify-content: space-between; }
.ctx svg { width: 6px; height: 10px; margin-right: 9px; }
.ctx hr { margin: 3px 2px 3px 28px; border: 0; border-top: 1px solid #d2d2d2; height: 1px; }
.ctx .dis { color: #777; } .ctx .hot { background: #91c9f7; }
.main-menu { left: 1403px; top: 267px; width: 161px; height: 379px; }
.sub-menu { left: 1558px; top: 574px; width: 160px; height: 292px; background: rgba(242,242,242,.89); }
```
